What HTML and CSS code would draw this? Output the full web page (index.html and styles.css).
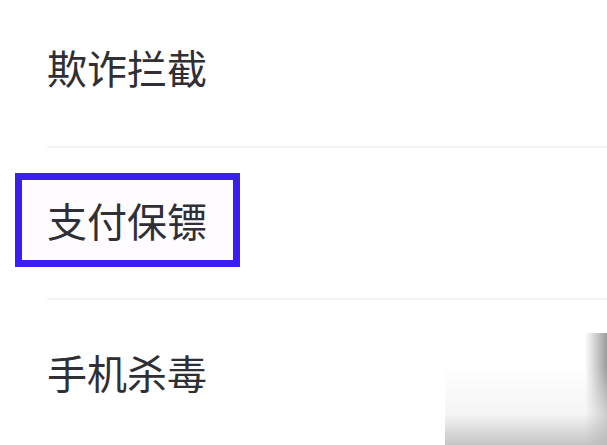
FILE: index.html
```html
<!DOCTYPE html>
<html lang="zh-CN">
<head>
    <meta charset="UTF-8">
    <meta name="viewport" content="width=device-width, initial-scale=1.0">
    <title>安全设置</title>
    <link rel="stylesheet" href="styles.css">
</head>
<body>
    <ul class="menu">
        <li class="menu-item"><span class="label">欺诈拦截</span></li>
        <li class="menu-item"><span class="label marked">支付保镖</span></li>
        <li class="menu-item"><span class="label">手机杀毒</span></li>
    </ul>

    <div class="watermark">
        <div class="wm-side"></div>
        <div class="wm-bottom"></div>
    </div>
</body>
</html>
```

FILE: styles.css
```css
* {
    margin: 0;
    padding: 0;
    box-sizing: border-box;
}

body {
    font-family: "Noto Sans CJK SC", "Noto Sans", sans-serif;
    background: #ffffff;
    color: #2f2f35;
    width: 607px;
    height: 445px;
    overflow: hidden;
    position: relative;
}

.menu {
    list-style: none;
    margin-top: -6px;
    margin-left: 47px;
}

.menu-item {
    height: 152px;
    display: flex;
    align-items: center;
    padding-bottom: 6px;
    border-top: 2px solid #f3f3f3;
}

.menu-item:first-child {
    border-top: none;
}

.label {
    font-size: 40px;
    line-height: 1;
}

.marked {
    display: inline-block;
    margin-left: -32px;
    padding: 20px 26px 20px 25px;
    border: 7px solid #3b1ef2;
    background: #fefcff;
}

.watermark {
    position: absolute;
    right: 0;
    bottom: 0;
    width: 162px;
    height: 112px;
}

.wm-side {
    position: absolute;
    right: 0;
    top: 0;
    bottom: 0;
    width: 22px;
    background: linear-gradient(to right, rgba(160, 160, 160, 0), rgba(150, 150, 150, 0.95));
}

.wm-bottom {
    position: absolute;
    left: 0;
    right: 0;
    bottom: 0;
    height: 78px;
    background: linear-gradient(to bottom, rgba(240, 240, 240, 0) 0%, rgba(238, 238, 238, 0.6) 60%, rgba(190, 190, 190, 0.9) 100%);
}
```
